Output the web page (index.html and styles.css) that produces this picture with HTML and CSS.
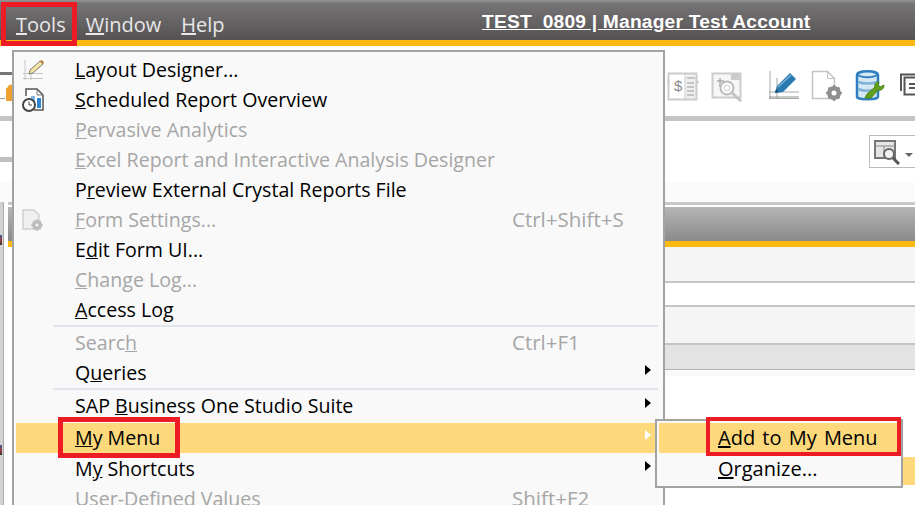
FILE: index.html
```html
<!DOCTYPE html>
<html lang="en">
  <head>
    <meta charset="UTF-8" />
    <title>SAP Business One - Tools menu</title>
    <link rel="stylesheet" href="styles.css">
  </head>

  <body>
    <!-- Application window behind the menu -->
    <div class="titlebar">
      <nav class="menubar">
        <span class="top-item"><u>T</u>ools</span>
        <span class="top-item"><u>W</u>indow</span>
        <span class="top-item"><u>H</u>elp</span>
      </nav>
      <div class="company">TEST_0809 | Manager Test Account</div>
    </div>
    <div class="toolbar">
      <svg class="left-tools" width="12" height="36" viewBox="0 0 12 36">
        <path d="M0 3.500h12" stroke="#777" stroke-width="3"/>
        <path d="M0 28.500h5" stroke="#999"/>
        <path d="M9 15a3 3 0 0 1 3 0v3H7zM6 18h6v13H6z" fill="#f0a030"/>
      </svg>
      <div class="tool-icons">
        <svg width="32" height="32" viewBox="0 0 32 32">
          <rect x="1.500" y="3.500" width="28" height="26" fill="#fff" stroke="#ccc" stroke-width="2"/>
          <path d="M18 4h11v25H18z" fill="#f0f0f0" stroke="#ccc"/>
          <path d="M20 8h8M20 13h7M20 17h7M20 21h7M20 25h7" stroke="#b5b5b5" stroke-width="1.500"/>
          <path d="M0 12h1M30 12h2" stroke="#bfdcc0" stroke-width="2"/>
          <text x="7" y="21" class="tool-dollar">$</text>
        </svg>
        <svg width="32" height="32" viewBox="0 0 32 32">
          <rect x="1.500" y="3.500" width="28" height="24" fill="#f6f6f6" stroke="#ccc" stroke-width="2"/>
          <path d="M20 3h10v7H20z" fill="#ccc"/>
          <path d="M6 11h7M9 8v6M8 15l5 3" stroke="#aaa" stroke-width="1.500"/>
          <circle cx="16" cy="18" r="6.500" fill="#fff" stroke="#bbb" stroke-width="2"/>
          <circle cx="16" cy="18" r="3" fill="none" stroke="#ccc"/>
          <path d="M21 23l9 8" stroke="#c4c4c4" stroke-width="3"/>
        </svg>
        <svg class="tool-gap" width="30" height="32" viewBox="0 0 30 32">
          <path d="M1 1v28M0 28.500h30M8 8v21M0 22h30" stroke="#a8a8a8" fill="none"/>
          <path d="M0 29v-2h30" stroke="#8a9a8a" fill="none"/>
          <path d="M6 23l2-7L21 3l6 6-13 13z" fill="#2a7ab0"/>
          <path d="M9 17L22 5" stroke="#7ab4d8" stroke-width="1.500"/>
          <path d="M6 23l1-4 3 3z" fill="#14506e"/>
        </svg>
        <svg width="32" height="32" viewBox="0 0 32 32">
          <path d="M1.500 1.500h15l7 7v20h-22z" fill="#fff" stroke="#c4c4c4" stroke-width="1.500"/>
          <path d="M16.500 1.500v7h7" fill="none" stroke="#c4c4c4"/>
          <circle cx="23" cy="23" r="5" fill="none" stroke="#8f8f8f" stroke-width="4"/>
          <path d="M23 15v16M15 23h16M17.500 17.500l11 11M28.500 17.500l-11 11" stroke="#8f8f8f" stroke-width="2"/>
          <circle cx="23" cy="23" r="2.500" fill="#fff"/>
        </svg>
        <svg width="32" height="32" viewBox="0 0 32 32">
          <path d="M2 5c0-5 21-5 21 0v22c0 3-21 3-21 0z" fill="#d6e8f4" stroke="#2f7fc0" stroke-width="2.500"/>
          <path d="M3 5c4 3 15 3 19 0" fill="none" stroke="#2f7fc0" stroke-width="2"/>
          <path d="M3 12c5 2 14 2 19 0M3 19c5 2 11 2 14 1" stroke="#7fb4d8" stroke-width="2.500" fill="none"/>
          <path d="M10 28l2-4 8-7c-1-3 1-5 4-5l-1 3 2 2 4-2c0 4-3 6-6 5l-7 8z" fill="#5f9e1e" stroke="#4d8814"/>
        </svg>
        <svg width="24" height="32" viewBox="0 0 24 32">
          <path d="M2 21V4.500h21" fill="none" stroke="#555" stroke-width="2"/>
          <rect x="5.500" y="7.500" width="19" height="17" fill="#fff" stroke="#555" stroke-width="2"/>
          <path d="M10 14h14M10 18h14" stroke="#555" stroke-width="2"/>
        </svg>
      </div>
    </div>
    <div class="toolbar-rule"></div>
    <div class="subbar">
      <div class="left-rule"></div>
      <div class="find-btn">
        <svg width="26" height="26" viewBox="0 0 26 26">
          <rect x="1" y="2" width="20" height="17" fill="#e6e6e6" stroke="#777" stroke-width="2"/>
          <path d="M1 7h20M10 7v12" stroke="#888"/>
          <circle cx="15" cy="15" r="5" fill="#f2f2f2" stroke="#666" stroke-width="2"/>
          <path d="M19 19l6 6" stroke="#555" stroke-width="3"/>
        </svg>
        <span class="find-caret"></span>
      </div>
    </div>
    <div class="form-window">
      <div class="form-head"></div>
      <div class="form-row"></div>
      <div class="form-input"></div>
      <div class="form-row form-row-short"></div>
      <div class="form-grid-head"></div>
      <div class="form-foot"></div>
      <div class="form-selected"></div>
    </div>
    <div class="gutter-mark gutter-mark-a"></div>
    <div class="gutter-mark gutter-mark-b"></div>

    <!-- Tools dropdown -->
    <div class="menu">
      <div class="menu-item">
        <span class="slot">
          <svg width="24" height="24" viewBox="0 0 24 24">
            <path d="M4 2v20M10 10v12M2 15.500h20M2 20.500h20" stroke="#c6c6c6" fill="none"/>
            <path d="M8 16l1-4L19 3l3 3-10 9z" fill="#f6e2a0" stroke="#7a7a7a"/>
            <path d="M19 3l2-1 2 3-1 1z" fill="#c07830"/>
          </svg>
        </span>
        <span class="label"><u>L</u>ayout Designer...</span>
      </div>
      <div class="menu-item">
        <span class="slot">
          <svg width="24" height="24" viewBox="0 0 24 24">
            <path d="M5 8V1h11l6 6v15h-9" fill="#fff" stroke="#555" stroke-width="1.500"/>
            <path d="M16 1v6h6" fill="none" stroke="#777"/>
            <path d="M10 8h4v5h-4z" fill="#7fb4e0"/>
            <path d="M16 10h4v10h-4z" fill="#2f86d0"/>
            <circle cx="8" cy="17" r="6" fill="#fff" stroke="#444" stroke-width="2"/>
            <path d="M8 13.500V17h3" stroke="#444" fill="none"/>
          </svg>
        </span>
        <span class="label"><u>S</u>cheduled Report Overview</span>
      </div>
      <div class="menu-item off"><span class="slot"></span><span class="label"><u>P</u>ervasive Analytics</span></div>
      <div class="menu-item off"><span class="slot"></span><span class="label"><u>E</u>xcel Report and Interactive Analysis Designer</span></div>
      <div class="menu-item"><span class="slot"></span><span class="label">P<u>r</u>eview External Crystal Reports File</span></div>
      <div class="menu-item off">
        <span class="slot">
          <svg width="24" height="24" viewBox="0 0 24 24">
            <path d="M2 2h11l5 5v14H2z" fill="#f0f0f0" stroke="#d0d0d0" stroke-width="1.500"/>
            <circle cx="16" cy="17" r="3.500" fill="none" stroke="#bdbdbd" stroke-width="3"/>
            <path d="M16 11v12M10 17h12M12 13l8 8M20 13l-8 8" stroke="#bdbdbd" stroke-width="1.500"/>
            <circle cx="16" cy="17" r="1.500" fill="#f4f4f4"/>
          </svg>
        </span>
        <span class="label"><u>F</u>orm Settings...</span><span class="keys">Ctrl+Shift+S</span>
      </div>
      <div class="menu-item"><span class="slot"></span><span class="label">E<u>d</u>it Form UI...</span></div>
      <div class="menu-item off"><span class="slot"></span><span class="label"><u>C</u>hange Log...</span></div>
      <div class="menu-item"><span class="slot"></span><span class="label"><u>A</u>ccess Log</span></div>
      <div class="menu-sep"></div>
      <div class="menu-item off"><span class="slot"></span><span class="label">Searc<u>h</u></span><span class="keys">Ctrl+F1</span></div>
      <div class="menu-item"><span class="slot"></span><span class="label">Q<u>u</u>eries</span><span class="arrow"></span></div>
      <div class="menu-sep"></div>
      <div class="menu-item"><span class="slot"></span><span class="label">SAP <u>B</u>usiness One Studio Suite</span><span class="arrow"></span></div>
      <div class="menu-item hot"><span class="slot"></span><span class="label"><u>M</u>y Menu</span><span class="arrow arrow-white"></span></div>
      <div class="menu-item"><span class="slot"></span><span class="label">M<u>y</u> Shortcuts</span><span class="arrow"></span></div>
      <div class="menu-item off"><span class="slot"></span><span class="label"><u>U</u>ser-Defined Values</span><span class="keys">Shift+F2</span></div>
    </div>

    <!-- My Menu submenu -->
    <div class="submenu">
      <div class="sub-item hot"><span><u>A</u>dd to My Menu</span></div>
      <div class="sub-item"><span><u>O</u>rganize...</span></div>
    </div>

    <!-- Red callouts drawn over the screenshot -->
    <div class="callout callout-tools"></div>
    <div class="callout callout-mymenu"></div>
    <div class="callout callout-add"></div>
  </body>
</html>
```

FILE: styles.css
```css
html,
body {
  margin: 0;
  height: 100%;
  overflow: hidden;
}

body {
  position: relative;
  background: #fff;
  font-family: "Open Sans", "Noto Sans", sans-serif;
}

.titlebar {
  height: 40px;
  display: flex;
  align-items: center;
  border-bottom: 6px solid #fdb913;
  background: linear-gradient(#949494 0, #757375 4px, #565254 100%);
}

.menubar {
  display: flex;
  gap: 20px;
  padding: 8px 0 0 16px;
  width: 466px;
  flex-shrink: 0;
}

.top-item {
  color: #e8e8e8;
  font-size: 20px;
}

.company {
  padding-top: 3px;
  color: #fff;
  font-family: "Liberation Sans", sans-serif;
  font-size: 19.2px;
  font-weight: bold;
  text-decoration: underline;
  letter-spacing: 0.2px;
  white-space: nowrap;
}

.toolbar {
  height: 70px;
  display: flex;
  justify-content: space-between;
  align-items: flex-start;
}

.left-tools {
  margin-top: 24px;
}

.tool-icons {
  display: flex;
  gap: 12px;
  padding-top: 24px;
  margin-right: -8px;
}

.tool-gap {
  margin-left: 14px;
}

.tool-dollar {
  font-family: "Liberation Sans", sans-serif;
  font-size: 15px;
  fill: #8a8a8a;
}

.toolbar-rule {
  height: 5px;
  background: #c4c4c4;
}

.subbar {
  height: 81px;
  display: flex;
  justify-content: space-between;
  background: linear-gradient(#fff 75%, #fbfbfb 75%);
}

.left-rule {
  width: 12px;
  height: 5px;
  margin-top: 36px;
  background: #c0c0c0;
}

.find-btn {
  width: 48px;
  height: 33px;
  margin-top: 14px;
  margin-right: -2px;
  box-sizing: border-box;
  border: 1px solid #bbb;
  display: flex;
  align-items: center;
  gap: 5px;
  padding-left: 4px;
}

.find-caret {
  margin-top: 6px;
  border-left: 4px solid transparent;
  border-right: 4px solid transparent;
  border-top: 4px solid #666;
}

.form-window {
  margin-left: 3px;
  border-left: 1px solid #aaa;
  padding-left: 4px;
  box-shadow: -3px 0 0 #d2d2d2;
  height: 303px;
}

.form-head {
  height: 36px;
  border-top: 3px solid #c8c8c8;
  border-bottom: 6px solid #fdb913;
  background: linear-gradient(#b8b8b8, #8a8a8a);
  box-shadow: inset 0 2px 0 #fff;
}

.form-row,
.form-input,
.form-grid-head,
.form-foot {
  margin-left: 6px;
}

.form-row {
  height: 34px;
  background: #f5f5f5;
  border-bottom: 2px solid #c4c4c4;
}

.form-input {
  height: 22px;
  background: #fff;
  border-bottom: 2px solid #c4c4c4;
}

.form-row-short {
  height: 36px;
}

.form-grid-head {
  height: 24px;
  background: #e3e3e3;
  border-bottom: 1px solid #b4b4b4;
}

.form-foot {
  height: 6px;
  background: #f9f9f9;
}

.form-selected {
  width: 40px;
  height: 28px;
  margin: 81px 0 0 auto;
  background: #fdd97c;
}

.gutter-mark {
  position: absolute;
  left: 0;
  width: 2px;
  height: 10px;
  background: linear-gradient(#3a5a9a, #a04040 50%, #333);
}

.gutter-mark-a {
  top: 235px;
}

.gutter-mark-b {
  top: 445px;
}

.menu {
  position: absolute;
  left: 12px;
  top: 50px;
  width: 653px;
  height: 470px;
  box-sizing: border-box;
  padding: 3px 2px;
  background: #f9f9f9;
  border: 2px solid #a2a2a2;
  color: #000;
  font-size: 19.6px;
}

.menu-item {
  height: 30px;
  display: flex;
  align-items: center;
  position: relative;
  white-space: nowrap;
}

.menu-item.off {
  color: #a6a6a6;
}

.menu-item.hot {
  margin: 2px 0 1px;
  background: #fdd97c;
}

.slot {
  width: 54px;
  padding-left: 5px;
  flex-shrink: 0;
  display: flex;
  align-items: center;
}

.label {
  flex: 1;
  padding-bottom: 2px;
}

.keys {
  position: absolute;
  left: 496px;
  padding-bottom: 2px;
  font-size: 20.5px;
}

.arrow {
  position: absolute;
  right: 10px;
  top: 7px;
  border-top: 5px solid transparent;
  border-bottom: 5px solid transparent;
  border-left: 6px solid #000;
}

.arrow-white {
  border-left-color: #fff;
}

.menu-sep {
  height: 2px;
  margin: 0 3px 1px 37px;
  background: #e0e6ec;
}

.submenu {
  position: absolute;
  left: 655px;
  top: 419px;
  width: 248px;
  height: 69px;
  box-sizing: border-box;
  padding: 2px;
  background: #f9f9f9;
  border: 2px solid #a2a2a2;
  font-size: 20px;
  word-spacing: 2px;
}

.sub-item {
  height: 30px;
  display: flex;
  align-items: center;
  padding-left: 59px;
  padding-bottom: 1px;
  box-sizing: border-box;
}

.sub-item.hot {
  margin-bottom: 1px;
  background: #fdd97c;
}

.callout {
  position: absolute;
  box-sizing: border-box;
  border: 4px solid #ed1c24;
}

.callout-tools {
  left: 1px;
  top: 2px;
  width: 76px;
  height: 44px;
  border-width: 5px;
}

.callout-mymenu {
  left: 58px;
  top: 417px;
  width: 122px;
  height: 41px;
  border-width: 5px;
}

.callout-add {
  left: 706px;
  top: 417px;
  width: 195px;
  height: 39px;
}
```
